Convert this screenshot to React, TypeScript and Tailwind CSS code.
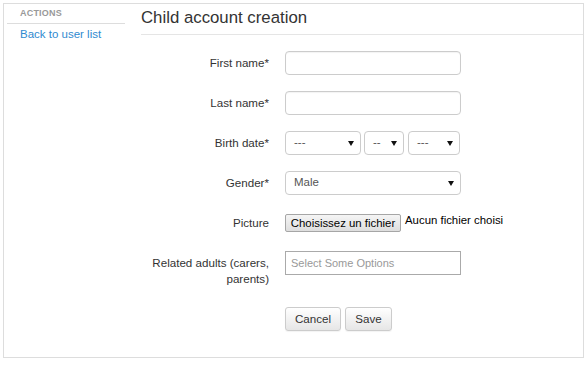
import React from "react";

const Arrow = () => (
  <svg width="6" height="5" viewBox="0 0 6 5" className="shrink-0">
    <path d="M0 0 L6 0 L3 5 Z" fill="#111" />
  </svg>
);

const Select = ({ w, value }: { w: string; value: string }) => (
  <div
    className={`${w} h-[24px] border border-[#ccc] rounded-[4px] bg-white flex items-center justify-between pl-[8px] pr-[6px] text-[11.5px] text-[#555]`}
  >
    <span>{value}</span>
    <Arrow />
  </div>
);

const Row = ({ label, children }: { label: string; children: React.ReactNode }) => (
  <div className="flex items-center h-[24px] mb-[16px]">
    <div className="w-[128px] text-right text-[11.6px] text-[#333] leading-[16px]">{label}</div>
    <div className="ml-[16px] flex items-center">{children}</div>
  </div>
);

export default function App() {
  return (
    <div
      className="w-[586px] h-[366px] bg-white pt-[3px] pl-[3px]"
      style={{ fontFamily: '"Liberation Sans", Arial, sans-serif' }}
    >
      <div className="w-[581px] h-[355px] border border-[#ddd] flex">
        {/* Sidebar */}
        <div className="w-[137px] shrink-0">
          <div className="ml-[3px] w-[118px] h-[20px] border-b border-[#ddd] pl-[13px] pt-[4px]">
            <div className="text-[9px] leading-[11px] font-bold text-[#999] tracking-[0.2px]">ACTIONS</div>
          </div>
          <div className="pl-[16px] mt-[2px] text-[11.5px] leading-[16px] text-[#2f8ad0]">Back to user list</div>
        </div>

        {/* Main */}
        <div className="flex-1">
          <div className="h-[31px] border-b border-[#e5e5e5] pt-[4px]">
            <div className="text-[16.8px] leading-[20px] text-[#333]">Child account creation</div>
          </div>

          <div className="pt-[16px]">
            <Row label="First name*">
              <div className="w-[176px] h-[24px] border border-[#ccc] rounded-[4px] bg-white shadow-[inset_0_1px_1px_rgba(0,0,0,0.05)]" />
            </Row>
            <Row label="Last name*">
              <div className="w-[176px] h-[24px] border border-[#ccc] rounded-[4px] bg-white shadow-[inset_0_1px_1px_rgba(0,0,0,0.05)]" />
            </Row>
            <Row label="Birth date*">
              <div className="flex">
                <Select w="w-[76px]" value="---" />
                <div className="ml-[3px]">
                  <Select w="w-[40px]" value="--" />
                </div>
                <div className="ml-[4px]">
                  <Select w="w-[52px]" value="---" />
                </div>
              </div>
            </Row>
            <Row label="Gender*">
              <Select w="w-[176px]" value="Male" />
            </Row>
            <Row label="Picture">
              <div className="flex items-center">
                <div className="w-[116px] h-[18px] border border-[#a6a6a6] rounded-[2px] bg-gradient-to-b from-[#f5f5f5] to-[#dedede] text-[11.4px] leading-[16px] text-black text-center">
                  Choisissez un fichier
                </div>
                <span className="ml-[4px] text-[11.4px] leading-[16px] text-black -mt-[6px]">Aucun fichier choisi</span>
              </div>
            </Row>
            <div className="flex items-start">
              <div className="w-[128px] text-right text-[11.6px] text-[#333] leading-[16px] pt-[4px]">
                Related adults (carers,
                <br />
                parents)
              </div>
              <div className="ml-[16px] w-[176px] h-[24px] border border-[#aaa] bg-white flex items-center pl-[5px] text-[11px] text-[#999]">
                Select Some Options
              </div>
            </div>
            <div className="flex mt-[20px] pl-[144px] gap-[4px]">
              <div className="w-[56px] h-[24px] border border-[#ccc] rounded-[3px] bg-gradient-to-b from-white to-[#e6e6e6] flex items-center justify-center text-[11.6px] text-[#333] shadow-[0_1px_1px_rgba(0,0,0,0.05)]">
                Cancel
              </div>
              <div className="w-[47px] h-[24px] border border-[#ccc] rounded-[3px] bg-gradient-to-b from-white to-[#e6e6e6] flex items-center justify-center text-[11.6px] text-[#333] shadow-[0_1px_1px_rgba(0,0,0,0.05)]">
                Save
              </div>
            </div>
          </div>
        </div>
      </div>
    </div>
  );
}
